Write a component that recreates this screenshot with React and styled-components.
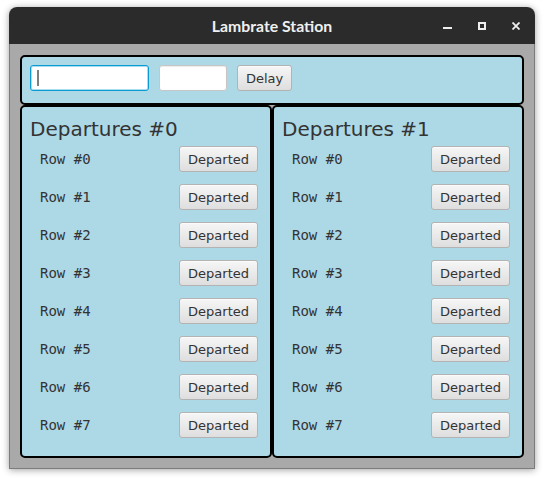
import React from "react";
import styled, { createGlobalStyle } from "styled-components";

const GlobalStyle = createGlobalStyle`
  html, body {
    margin: 0;
    padding: 0;
    background: #ffffff;
  }
  body {
    width: 544px;
    height: 478px;
    overflow: hidden;
    font-family: "DejaVu Sans", "Liberation Sans", sans-serif;
  }
`;

const Window = styled.div`
  margin: 7px 0 0 9px;
  width: 526px;
  height: 462px;
  display: flex;
  flex-direction: column;
  border-radius: 8px 8px 0 0;
  box-shadow: 0 1px 7px rgba(0, 0, 0, 0.38);
`;

const TitleBar = styled.div`
  height: 37px;
  flex: none;
  position: relative;
  display: flex;
  align-items: center;
  justify-content: center;
  background: #2b2b2b;
  border-radius: 8px 8px 0 0;
  color: #f0f0f0;
  font-family: Lato, "Noto Sans", sans-serif;
  font-weight: 700;
  font-size: 15.8px;
`;

const Controls = styled.div`
  position: absolute;
  right: 15px;
  top: 0;
  bottom: 0;
  display: flex;
  align-items: center;
  gap: 26px;
`;

const Content = styled.div`
  flex: 1;
  display: flex;
  flex-direction: column;
  background: #a9a9a9;
  border: 1px solid #7c7c7c;
  border-top: none;
  padding: 11px 10px 10px;
`;

const Panel = styled.div`
  border: 2px solid #000;
  border-radius: 5px;
  background: #add8e6;
  box-sizing: border-box;
`;

const TopBar = styled(Panel)`
  height: 50px;
  flex: none;
  display: flex;
  align-items: flex-start;
  gap: 10px;
  padding: 8px;
`;

const Columns = styled.div`
  flex: 1;
  display: grid;
  grid-template-columns: 1fr 1fr;
`;

const Departures = styled(Panel)`
  padding: 10px 12px 0 8px;
  display: flex;
  flex-direction: column;
`;

const Heading = styled.div`
  font-size: 20px;
  line-height: 24px;
  color: #333;
  margin-bottom: 5px;
`;

const Rows = styled.div`
  display: flex;
  flex-direction: column;
  gap: 12px;
  padding-left: 10px;
`;

const Row = styled.div`
  height: 26px;
  display: flex;
  align-items: center;
  justify-content: space-between;
`;

const RowLabel = styled.span`
  font-family: "DejaVu Sans Mono", "Liberation Mono", monospace;
  font-size: 14px;
  color: #333;
`;

const Button = styled.button`
  height: 26px;
  box-sizing: border-box;
  padding: 0 8px;
  border: 1px solid #b3b3b3;
  border-radius: 3px;
  background: linear-gradient(#f6f6f6, #dedede);
  box-shadow: inset 0 1px 0 #fbfbfb;
  font-family: "DejaVu Sans", sans-serif;
  font-size: 13px;
  color: #333;
`;

const Field = styled.div`
  width: ${(p) => p.$w}px;
  height: 26px;
  box-sizing: border-box;
  border-radius: 3px;
  background: #fff;
  border: 1px solid ${(p) => (p.$focused ? "#0a9bd3" : "#c6c6c6")};
  box-shadow: ${(p) =>
    p.$focused ? "inset 0 0 0 1px #a8dcf0" : "inset 0 1px 1px #ececec"};
  display: flex;
  align-items: center;
  padding-left: 6px;
`;

const Caret = styled.span`
  width: 2px;
  height: 16px;
  background: #808080;
`;

const rows = [0, 1, 2, 3, 4, 5, 6, 7];

function DeparturesPanel({ index }) {
  return (
    <Departures>
      <Heading>Departures #{index}</Heading>
      <Rows>
        {rows.map((r) => (
          <Row key={r}>
            <RowLabel>Row #{r}</RowLabel>
            <Button>Departed</Button>
          </Row>
        ))}
      </Rows>
    </Departures>
  );
}

export default function App() {
  return (
    <>
      <GlobalStyle />
      <Window>
        <TitleBar>
          Lambrate Station
          <Controls>
            <svg width="9" height="9" viewBox="0 0 9 9">
              <rect x="0" y="6" width="9" height="2" fill="#eee" />
            </svg>
            <svg width="8" height="8" viewBox="0 0 8 8">
              <rect x="1" y="1" width="6" height="6" fill="none" stroke="#eee" strokeWidth="2" />
            </svg>
            <svg width="8" height="8" viewBox="0 0 8 8">
              <path d="M0.5 0.5 L7.5 7.5 M7.5 0.5 L0.5 7.5" stroke="#eee" strokeWidth="1.8" />
            </svg>
          </Controls>
        </TitleBar>
        <Content>
          <TopBar>
            <Field $w={119} $focused>
              <Caret />
            </Field>
            <Field $w={68} />
            <Button>Delay</Button>
          </TopBar>
          <Columns>
            <DeparturesPanel index={0} />
            <DeparturesPanel index={1} />
          </Columns>
        </Content>
      </Window>
    </>
  );
}
